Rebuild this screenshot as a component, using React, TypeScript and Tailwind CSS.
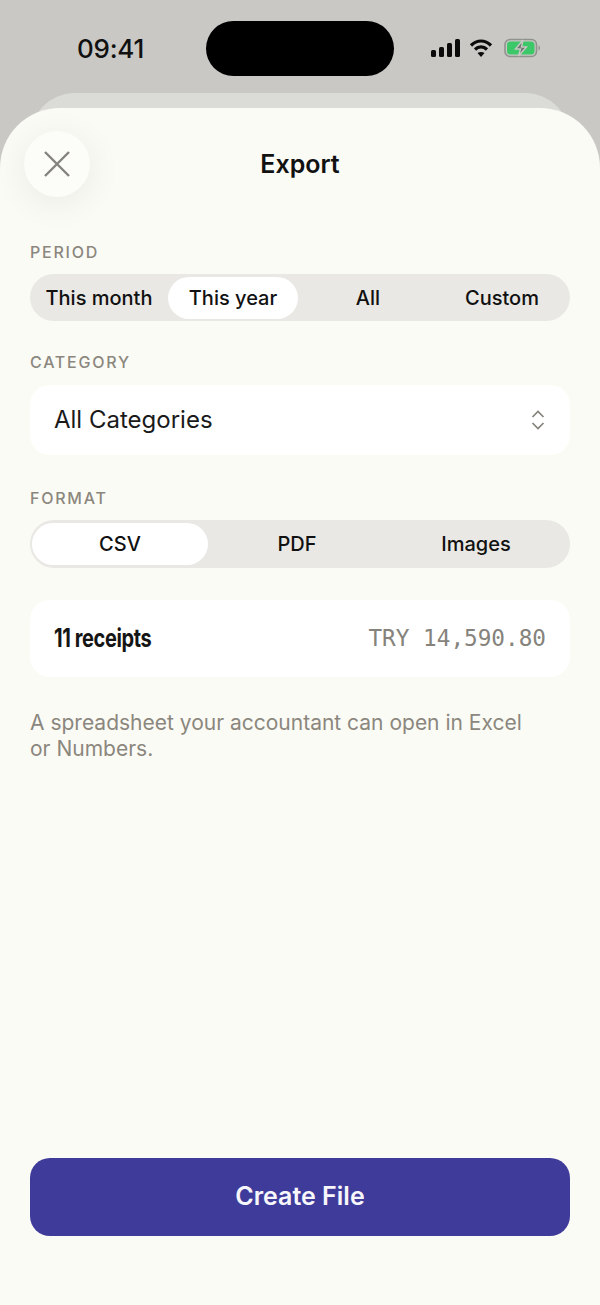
export default function App() {
  const label = "text-[16px] leading-[20px] font-medium tracking-[0.11em] text-[#8b877e]";
  return (
    <div className="w-[600px] h-[1305px] bg-[#c9c8c5] flex flex-col overflow-hidden font-['Inter',sans-serif] text-[#111]">
      <div className="h-[93px] shrink-0 flex items-start">
        <div className="w-[206px] pt-[33px] pl-[77px] text-[26px] leading-[31px] font-medium tracking-[-0.01em] whitespace-nowrap">09:41</div>
        <div className="mt-[21px] w-[188px] h-[55px] rounded-full bg-black" />
        <div className="flex items-center pl-[36px] pt-[38px] gap-[9px]">
          <svg width="30" height="20" viewBox="0 0 30 20" fill="#0b0b0b">
            <rect x="1" y="12" width="5" height="7" rx="1.5" />
            <rect x="9" y="9" width="5" height="10" rx="1.5" />
            <rect x="17" y="5" width="5" height="14" rx="1.5" />
            <rect x="25" y="1" width="5" height="18" rx="1.5" />
          </svg>
          <svg width="24" height="20" viewBox="0 0 24 20" fill="none" stroke="#0b0b0b" strokeWidth="3.2">
            <path d="M2 7.5 C8 1.5 16 1.5 22 7.5" />
            <path d="M6 11.5 C9.5 8 14.5 8 18 11.5" />
            <path d="M12 19 L8.5 15 C10.5 13.5 13.5 13.5 15.5 15 Z" fill="#0b0b0b" stroke="none" />
          </svg>
          <svg width="38" height="20" viewBox="0 0 38 20" className="ml-[2px]">
            <rect x="1" y="1.5" width="31.5" height="17" rx="5" fill="none" stroke="#8f938c" strokeWidth="1.6" />
            <rect x="3" y="3.5" width="27.5" height="13" rx="3.5" fill="#3cc768" />
            <path d="M34.5 7.5 C36.5 8 36.5 12 34.5 12.5 Z" fill="#8f938c" />
            <path d="M19 2 L11.5 11 H16.5 L14.5 18 L22.5 9 H17.5 Z" fill="#6f7570" stroke="#c9c8c5" strokeWidth="1.4" />
          </svg>
        </div>
      </div>
      <div className="shrink-0 mx-[30px] h-[60px] -mb-[45px] rounded-t-[45px] bg-[#dbdbd7]" />
      <div className="relative flex-1 rounded-t-[60px] bg-[#fbfbf5] px-[30px] flex flex-col">
        <div className="grid grid-cols-[1fr_auto_1fr] items-center h-[66px] mt-[23px]">
          <div className="-ml-[6px] w-[66px] h-[66px] rounded-full bg-[#fcfcf8] flex items-center justify-center shadow-[0_6px_36px_rgba(0,0,0,0.07)]">
            <svg width="28" height="28" viewBox="0 0 28 28" stroke="#85837c" strokeWidth="2.4" fill="none">
              <path d="M2 2 L26 26 M26 2 L2 26" />
            </svg>
          </div>
          <div className="text-[25px] leading-[30px] font-semibold text-[#111] -mt-[1px]">Export</div>
          <div />
        </div>

        <div className={`mt-[45px] ${label}`}>PERIOD</div>
        <div className="mt-[12px] h-[47px] rounded-full bg-[#e9e8e4] grid grid-cols-[132px_135px_135px_138px] items-center px-[1px] text-[20px] font-medium text-[#111]">
          <div className="text-center pl-[4px] whitespace-nowrap">This month</div>
          <div className="ml-[5px] w-[130px] h-[42px] rounded-full bg-white flex items-center justify-center whitespace-nowrap">This year</div>
          <div className="text-center pl-[5px]">All</div>
          <div className="text-center">Custom</div>
        </div>

        <div className={`mt-[31px] ${label}`}>CATEGORY</div>
        <div className="mt-[13px] h-[70px] rounded-[20px] bg-white flex items-center justify-between pl-[24px] pr-[24px]">
          <span className="text-[24px] text-[#1a1a1a]">All Categories</span>
          <svg width="16" height="22" viewBox="0 0 16 22" fill="none" stroke="#85837c" strokeWidth="1.7">
            <path d="M2.5 8 L8 2.5 L13.5 8" />
            <path d="M2.5 14 L8 19.5 L13.5 14" />
          </svg>
        </div>

        <div className={`mt-[33px] ${label}`}>FORMAT</div>
        <div className="mt-[12px] h-[48px] rounded-full bg-[#e9e8e4] grid grid-cols-[176px_1fr_182px] items-center px-[2px] text-[20px] font-medium text-[#111]">
          <div className="h-[42px] rounded-full bg-white flex items-center justify-center">CSV</div>
          <div className="text-center">PDF</div>
          <div className="text-center pr-[2px]">Images</div>
        </div>

        <div className="mt-[32px] h-[77px] rounded-[20px] bg-white flex items-center justify-between px-[24px]">
          <span className="text-[25px] font-bold tracking-[-0.02em] text-[#151515] origin-left scale-x-[0.8] whitespace-nowrap">11 receipts</span>
          <span className="font-['DejaVu_Sans_Mono',monospace] text-[22.7px] text-[#85837c] whitespace-nowrap">TRY 14,590.80</span>
        </div>

        <p className="mt-[33px] text-[21px] leading-[25.5px] text-[#8b877e]">
          A spreadsheet your accountant can open in Excel
          <br />
          or Numbers.
        </p>

        <div className="flex-1" />
        <button className="mb-[69px] h-[78px] rounded-[20px] bg-[#3f3b9b] text-[25px] font-semibold text-[#f7f7fb]">Create File</button>
      </div>
    </div>
  );
}
